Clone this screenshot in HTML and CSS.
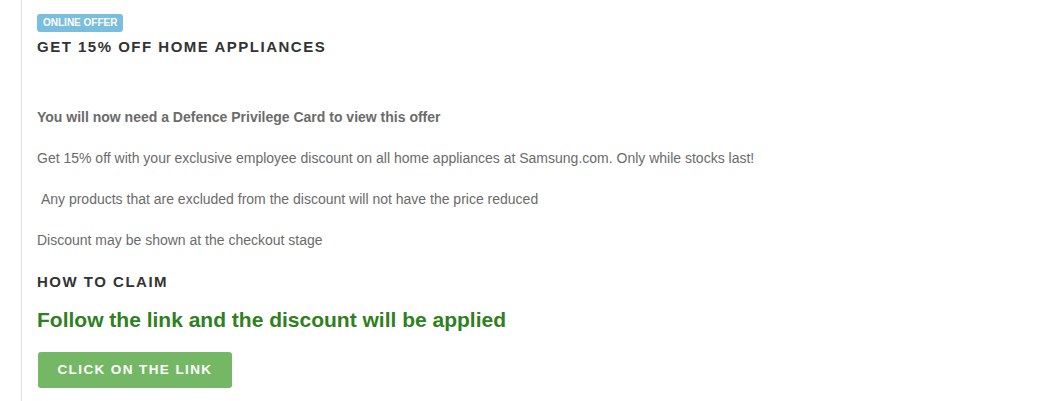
FILE: index.html
```html
<!DOCTYPE html>
<html lang="en">
<head>
    <meta charset="UTF-8">
    <meta name="viewport" content="width=device-width, initial-scale=1.0">
    <title>Get 15% off home appliances</title>
    <link rel="stylesheet" href="styles.css">
</head>
<body>
    <main class="offer">
        <span class="badge">Online offer</span>
        <h1 class="offer-title">Get 15% off home appliances</h1>

        <div class="offer-body">
            <p class="notice">You will now need a Defence Privilege Card to view this offer</p>
            <p>Get 15% off with your exclusive employee discount on all home appliances at Samsung.com. Only while stocks last!</p>
            <p>&nbsp;Any products that are excluded from the discount will not have the price reduced</p>
            <p>Discount may be shown at the checkout stage</p>
        </div>

        <h2 class="claim-title">How to claim</h2>
        <p class="claim-text">Follow the link and the discount will be applied</p>
        <a class="claim-button" href="#">Click on the link</a>
    </main>
</body>
</html>
```

FILE: styles.css
```css
* {
    margin: 0;
    padding: 0;
    box-sizing: border-box;
    font-family: "Liberation Sans", Arial, sans-serif;
}

body {
    background-color: #fff;
    color: #333;
}

.offer {
    margin-left: 21px;
    border-left: 1px solid #e0e0e0;
    padding: 14px 16px 12px 15px;
    min-height: 401px;
    display: flex;
    flex-direction: column;
    align-items: flex-start;
}

.badge {
    display: inline-block;
    background-color: #79bedd;
    color: #fff;
    font-size: 10px;
    font-weight: bold;
    text-transform: uppercase;
    line-height: 18px;
    padding: 0 6px;
    border-radius: 3px;
}

.offer-title {
    font-size: 15px;
    font-weight: bold;
    text-transform: uppercase;
    letter-spacing: 1.5px;
    color: #333;
    margin-top: 6px;
    line-height: 18px;
}

.offer-body {
    margin-top: 53px;
    display: flex;
    flex-direction: column;
    gap: 25px;
}

.offer-body p {
    font-size: 14px;
    line-height: 16px;
    color: #6b6b6b;
}

.offer-body .notice {
    font-weight: bold;
}

.claim-title {
    font-size: 15px;
    font-weight: bold;
    text-transform: uppercase;
    letter-spacing: 1.5px;
    color: #333;
    margin-top: 25px;
    line-height: 18px;
}

.claim-text {
    font-size: 21px;
    font-weight: bold;
    color: #2e8020;
    margin-top: 17px;
    line-height: 24px;
}

.claim-button {
    display: inline-block;
    margin-top: 20px;
    margin-left: 1px;
    background-color: #74b866;
    color: #fff;
    font-size: 13.5px;
    font-weight: bold;
    text-transform: uppercase;
    letter-spacing: 1.4px;
    text-decoration: none;
    line-height: 36px;
    width: 194px;
    text-align: center;
    border-radius: 3px;
}
```
